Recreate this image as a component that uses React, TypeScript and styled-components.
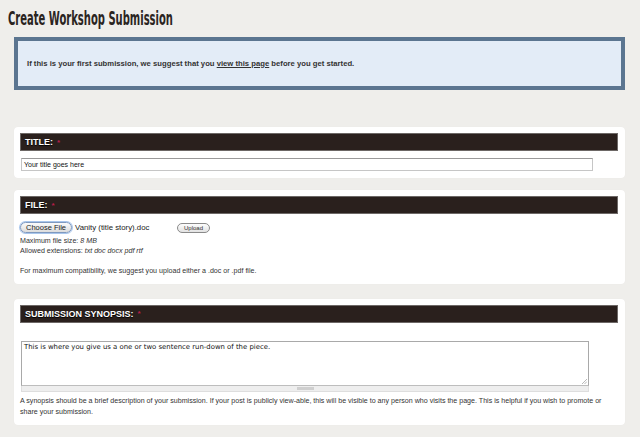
import React from 'react'
import styled, { createGlobalStyle } from 'styled-components'

const GlobalStyle = createGlobalStyle`
  html, body {
    margin: 0;
    padding: 0;
    background: #efeeeb;
  }
  body {
    font-family: "Liberation Sans", Arial, sans-serif;
    color: #2b2b2b;
  }
`

const Page = styled.div`
  width: 640px;
  height: 437px;
  overflow: hidden;
  padding: 0 15px 0 14px;
  box-sizing: border-box;
`

const PageTitle = styled.h1`
  margin: 0 0 0 -6px;
  padding-top: 6px;
  height: 32px;
  box-sizing: border-box;
  font-family: "DejaVu Sans Condensed", "DejaVu Sans", sans-serif;
  font-weight: 700;
  font-size: 20px;
  line-height: 24px;
  color: #2a241f;
  white-space: nowrap;
  transform: scaleX(0.555);
  transform-origin: left center;
`

const Notice = styled.div`
  margin-top: 5px;
  height: 53px;
  box-sizing: border-box;
  border: 4px solid #5b7590;
  background: #e3ecf7;
  display: flex;
  align-items: center;
  padding: 0 9px 1px;
  font-size: 7.7px;
  font-weight: 700;
  color: #333;
`

const NoticeLink = styled.a`
  color: #333;
  text-decoration: underline;
`

const Card = styled.section<{ $top: number }>`
  margin-top: ${(p) => p.$top}px;
  background: #fff;
  border-radius: 4px;
  padding: 6px 7px 7px 6px;
  box-shadow: 0 0 1px rgba(0, 0, 0, 0.05);
`

const Bar = styled.div`
  height: 18px;
  box-sizing: border-box;
  background: #2a201d;
  border: 1px solid #6d6866;
  display: flex;
  align-items: center;
  padding-left: 4px;
  font-size: 9px;
  font-weight: 700;
  color: #fff;
  text-shadow: 0 1px 1px #000;
`

const Required = styled.span`
  color: #b81d4a;
  margin-left: 4px;
  text-shadow: none;
  font-size: 8px;
`

const TextInput = styled.div`
  margin: 7px 25px 0 1px;
  height: 13px;
  box-sizing: border-box;
  border: 1px solid #c6c6c6;
  border-top-color: #9a9a9a;
  display: flex;
  align-items: center;
  padding-left: 2px;
  font-size: 7px;
  color: #111;
`

const FileRow = styled.div`
  display: flex;
  align-items: center;
  margin-top: 8px;
  height: 11px;
`

const ChooseButton = styled.span`
  height: 11px;
  box-sizing: border-box;
  padding: 0 5px;
  border-radius: 6px;
  border: 1px solid #7f99bf;
  box-shadow: 0 0 0 1px #a9c6ec;
  background: linear-gradient(#fbfbfb, #dcdcdc);
  display: flex;
  align-items: center;
  font-size: 7.5px;
  color: #222;
`

const FileName = styled.span`
  margin-left: 3px;
  width: 102px;
  font-size: 7.8px;
  color: #222;
`

const UploadButton = styled.span`
  height: 10px;
  box-sizing: border-box;
  padding: 0 6px;
  border-radius: 5px;
  border: 1px solid #8a8a8a;
  background: linear-gradient(#fdfdfd, #e2e2e2);
  display: flex;
  align-items: center;
  font-size: 6px;
  color: #333;
`

const Help = styled.div<{ $gap?: number; $leading?: number }>`
  margin-top: ${(p) => p.$gap ?? 0}px;
  font-size: 7.1px;
  line-height: ${(p) => p.$leading ?? 9.5}px;
  color: #333;
`

const TextArea = styled.div`
  margin: 18px 29px 0 1px;
  height: 45px;
  box-sizing: border-box;
  border: 1px solid #a9a9a9;
  border-bottom-color: #bdbdbd;
  padding: 1px 2px;
  font-family: "DejaVu Sans", Verdana, sans-serif;
  font-size: 6.9px;
  color: #111;
  position: relative;
`

const ResizeMark = styled.svg`
  position: absolute;
  right: 1px;
  bottom: 1px;
`

const Grippie = styled.div`
  margin: 0 29px 0 1px;
  height: 6px;
  background: #eeeeee;
  border: 1px solid #dedede;
  border-top: none;
  box-sizing: border-box;
  display: flex;
  justify-content: center;
  align-items: center;
`

const GripHandle = styled.span`
  width: 17px;
  height: 3px;
  background: #cfcfcf;
`

export default function App() {
  return (
    <>
      <GlobalStyle />
      <Page>
        <PageTitle>Create Workshop Submission</PageTitle>
        <Notice>
          <span>
            If this is your first submission, we suggest that you{' '}
            <NoticeLink href="#">view this page</NoticeLink> before you get started.
          </span>
        </Notice>

        <Card $top={37}>
          <Bar>
            TITLE:<Required>*</Required>
          </Bar>
          <TextInput>Your title goes here</TextInput>
        </Card>

        <Card $top={12}>
          <Bar>
            FILE:<Required>*</Required>
          </Bar>
          <FileRow>
            <ChooseButton>Choose File</ChooseButton>
            <FileName>Vanity (title story).doc</FileName>
            <UploadButton>Upload</UploadButton>
          </FileRow>
          <Help $gap={4}>
            Maximum file size: <em>8 MB</em>
          </Help>
          <Help>
            Allowed extensions: <em>txt doc docx pdf rtf</em>
          </Help>
          <Help $gap={11}>
            For maximum compatibility, we suggest you upload either a .doc or .pdf file.
          </Help>
        </Card>

        <Card $top={15}>
          <Bar>
            SUBMISSION SYNOPSIS:<Required>*</Required>
          </Bar>
          <TextArea>
            This is where you give us a one or two sentence run-down of the piece.
            <ResizeMark width="6" height="6" viewBox="0 0 6 6">
              <path d="M1 6 L6 1 M3.5 6 L6 3.5" stroke="#999" strokeWidth="0.7" />
            </ResizeMark>
          </TextArea>
          <Grippie>
            <GripHandle />
          </Grippie>
          <Help $gap={4} $leading={11}>
            A synopsis should be a brief description of your submission. If your post is
            publicly view-able, this will be visible to any person who visits the page. This
            is helpful if you wish to promote or share your submission.
          </Help>
        </Card>
      </Page>
    </>
  )
}
